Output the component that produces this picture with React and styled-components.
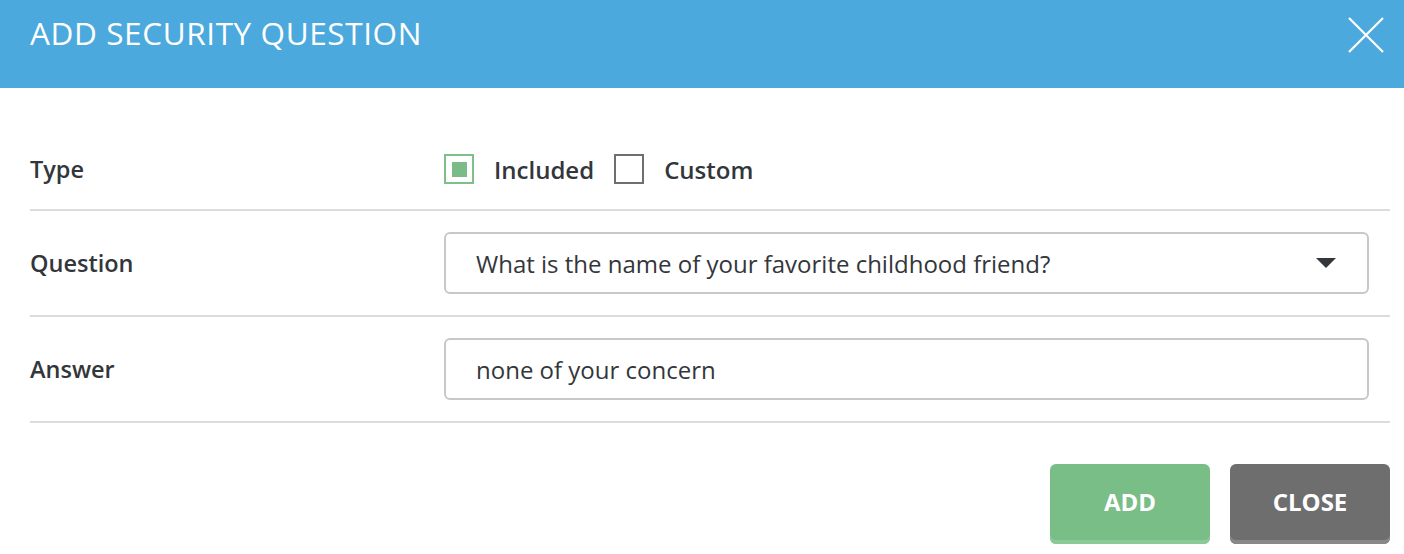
import React from 'react';
import styled, { createGlobalStyle } from 'styled-components';

const GlobalStyle = createGlobalStyle`
  html, body {
    margin: 0;
    padding: 0;
    background: #ffffff;
  }
  body {
    font-family: "Open Sans", "Liberation Sans", sans-serif;
    color: #33363b;
  }
`;

const Modal = styled.div`
  width: 1404px;
  height: 554px;
  background: #ffffff;
  overflow: hidden;
`;

const Header = styled.div`
  height: 88px;
  background-color: #4ba9dd;
  display: flex;
  align-items: flex-start;
  justify-content: space-between;
  padding: 0 20px 0 30px;
  box-sizing: border-box;
`;

const Title = styled.h2`
  margin: 11px 0 0;
  color: #ffffff;
  font-size: 31.5px;
  font-weight: 400;
  line-height: 43px;
  letter-spacing: 0.6px;
`;

const CloseIcon = styled.button`
  width: 36px;
  height: 36px;
  margin-top: 17px;
  padding: 0;
  border: none;
  background: none;
  cursor: pointer;
`;

const Body = styled.div`
  padding: 17px 14px 0 30px;
`;

const Row = styled.div`
  display: flex;
  align-items: center;
  padding: ${p => (p.$first ? '33px 0 9px' : '21px 0')};
  min-height: 62px;
  border-bottom: 2px solid #dcdcdc;
`;

const Label = styled.div`
  width: 414px;
  flex-shrink: 0;
  font-size: 23.5px;
  font-weight: 600;
  color: #33363b;
`;

const Options = styled.div`
  display: flex;
  align-items: center;
`;

const Option = styled.label`
  display: flex;
  align-items: center;
  gap: 20px;
  margin-right: 20px;
  font-size: 24px;
  font-weight: 600;
  color: #33363b;
  cursor: pointer;
`;

const Box = styled.span`
  width: 30px;
  height: 30px;
  box-sizing: border-box;
  border: 2px solid ${p => (p.$checked ? '#7cc08b' : '#6f6f6f')};
  display: flex;
  align-items: center;
  justify-content: center;

  &::after {
    content: '';
    display: ${p => (p.$checked ? 'block' : 'none')};
    width: 15px;
    height: 15px;
    background: #79bc87;
  }
`;

const Field = styled.div`
  width: 925px;
  height: 62px;
  box-sizing: border-box;
  border: 2px solid #c8c8c8;
  border-radius: 6px;
  display: flex;
  align-items: center;
  justify-content: space-between;
  padding: 0 30px;
  font-size: 24px;
  color: #33363b;
`;

const Caret = styled.span`
  width: 0;
  height: 0;
  border-left: 10px solid transparent;
  border-right: 10px solid transparent;
  border-top: 10px solid #33363b;
  margin-right: 1px;
`;

const Footer = styled.div`
  display: flex;
  justify-content: flex-end;
  gap: 20px;
  padding-top: 41px;
`;

const Button = styled.button`
  width: 160px;
  height: 80px;
  border: none;
  border-radius: 6px;
  font-family: "Open Sans", "Liberation Sans", sans-serif;
  font-size: 24px;
  font-weight: 700;
  color: #ffffff;
  background: ${p => (p.$variant === 'add' ? '#79bd87' : '#6e6e6e')};
  box-shadow: inset 0 -4px 0 ${p => (p.$variant === 'add' ? '#8cc998' : '#888888')};
  padding: 0 0 5px;
  cursor: pointer;
`;

const AddSecurityQuestion = () => {
  return (
    <Modal>
      <Header>
        <Title>ADD SECURITY QUESTION</Title>
        <CloseIcon aria-label="Close">
          <svg width="36" height="36" viewBox="0 0 36 36">
            <path d="M1 1 L35 35 M35 1 L1 35" stroke="#ffffff" strokeWidth="2.2" fill="none" />
          </svg>
        </CloseIcon>
      </Header>
      <Body>
        <Row $first>
          <Label>Type</Label>
          <Options>
            <Option>
              <Box $checked />
              Included
            </Option>
            <Option>
              <Box />
              Custom
            </Option>
          </Options>
        </Row>
        <Row>
          <Label>Question</Label>
          <Field>
            What is the name of your favorite childhood friend?
            <Caret />
          </Field>
        </Row>
        <Row>
          <Label>Answer</Label>
          <Field>none of your concern</Field>
        </Row>
        <Footer>
          <Button $variant="add">ADD</Button>
          <Button $variant="close">CLOSE</Button>
        </Footer>
      </Body>
    </Modal>
  );
};

export default function App() {
  return (
    <>
      <GlobalStyle />
      <AddSecurityQuestion />
    </>
  );
}
